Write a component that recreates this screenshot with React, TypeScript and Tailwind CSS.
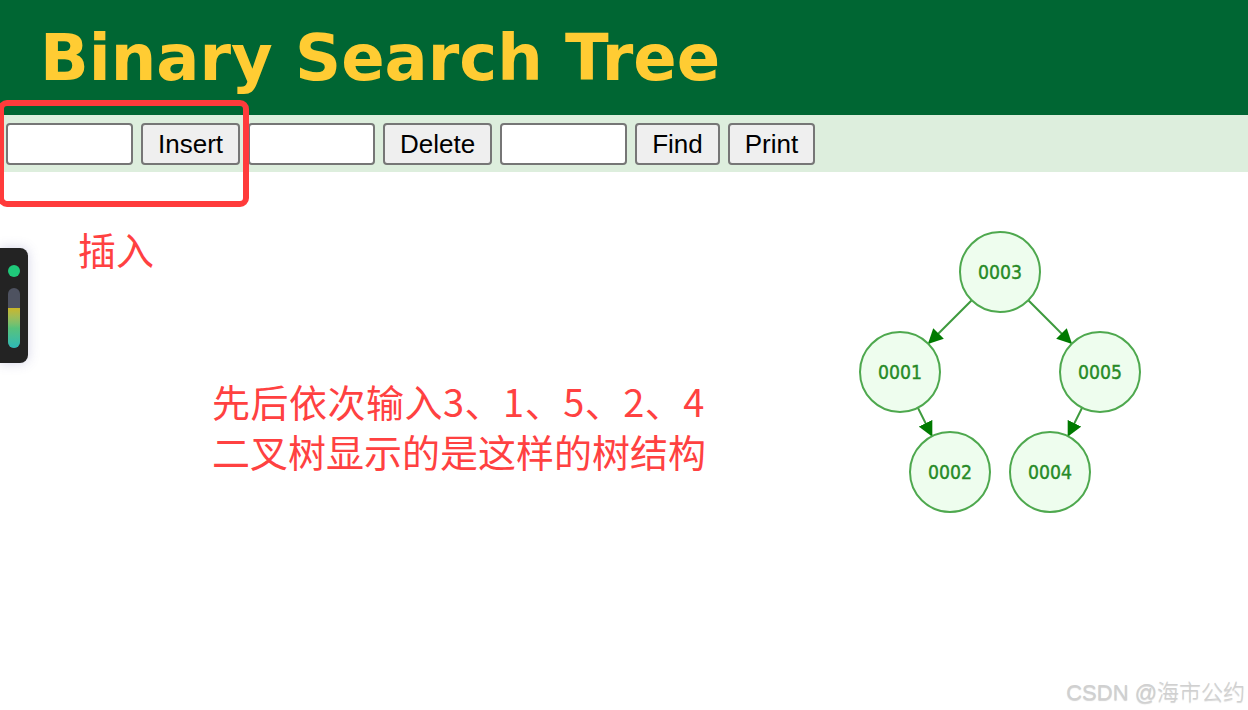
import React from "react";

type Node = { id: string; x: number; y: number };

const nodes: Node[] = [
  { id: "0003", x: 145, y: 44 },
  { id: "0001", x: 45, y: 144 },
  { id: "0005", x: 245, y: 144 },
  { id: "0002", x: 95, y: 244 },
  { id: "0004", x: 195, y: 244 },
];

const edges: [string, string][] = [
  ["0003", "0001"],
  ["0003", "0005"],
  ["0001", "0002"],
  ["0005", "0004"],
];

const R = 40;

function TreeDiagram() {
  const byId = (id: string) => nodes.find((n) => n.id === id)!;
  return (
    <svg width="290" height="290" viewBox="0 0 290 290" className="shrink-0">
      <defs>
        <marker id="arrow" viewBox="0 0 10 10" refX="9" refY="5" markerWidth="7.5" markerHeight="7.5" orient="auto">
          <path d="M0,0 L10,5 L0,10 z" fill="#007a00" />
        </marker>
      </defs>
      {edges.map(([a, b]) => {
        const p = byId(a);
        const q = byId(b);
        const dx = q.x - p.x;
        const dy = q.y - p.y;
        const len = Math.hypot(dx, dy);
        const ux = dx / len;
        const uy = dy / len;
        return (
          <line
            key={a + b}
            x1={p.x + ux * R}
            y1={p.y + uy * R}
            x2={q.x - ux * (R + 1)}
            y2={q.y - uy * (R + 1)}
            stroke="#3d9a3d"
            strokeWidth="2"
            markerEnd="url(#arrow)"
          />
        );
      })}
      {nodes.map((n) => (
        <g key={n.id}>
          <circle cx={n.x} cy={n.y} r={R} fill="#eefdee" stroke="#4ea84e" strokeWidth="2" />
          <text
            x={n.x}
            y={n.y + 7}
            textAnchor="middle"
            fontSize="20"
            fill="#278a27"
            stroke="#278a27"
            strokeWidth="0.4"
            textLength="44"
            lengthAdjust="spacingAndGlyphs"
            style={{ fontFamily: '"DejaVu Sans Condensed", "DejaVu Sans", sans-serif' }}
          >
            {n.id}
          </text>
        </g>
      ))}
    </svg>
  );
}

const inputCls =
  "w-[127px] h-[42px] bg-white border-2 border-[#767676] rounded-[4px] px-1 text-[26px]";
const btnCls =
  "h-[42px] px-[15px] bg-[#efefef] border-2 border-[#767676] rounded-[4px] text-[26px] text-black leading-none";

export default function App() {
  return (
    <div className="relative w-[1248px] h-[710px] bg-white overflow-hidden font-['Liberation_Sans',Arial,sans-serif]">
      <header className="h-[115px] bg-[#006633] pl-[40px] pt-[18px]">
        <h1 className="text-[#ffcc33] text-[64px] leading-[80px] font-bold font-['DejaVu_Sans',Verdana,sans-serif]">
          Binary Search Tree
        </h1>
      </header>

      <div className="h-[57px] bg-[#ddeedd] flex items-start gap-[8px] pl-[6px] pt-[8px]">
        <input className={inputCls} />
        <button className={btnCls}>Insert</button>
        <input className={inputCls} />
        <button className={btnCls}>Delete</button>
        <input className={inputCls} />
        <button className={btnCls}>Find</button>
        <button className={btnCls}>Print</button>
      </div>

      <main className="flex font-['Microsoft_YaHei','Noto_Sans_CJK_SC',sans-serif] text-[#ff4141] text-[38px] leading-[50px]">
        <div className="flex-1">
          <p className="ml-[78px] mt-[52px]">插入</p>
          <p className="ml-[212px] mt-[102px]">
            <span className="tracking-[0.5px]">先后依次输入3、1、5、2、4</span>
            <br />
            二叉树显示的是这样的树结构
          </p>
        </div>
        <div className="mt-[56px] mr-[103px]">
          <TreeDiagram />
        </div>
      </main>

      {/* red annotation box */}
      <div className="absolute left-[-2px] top-[100px] w-[251px] h-[107px] border-[6px] border-[#ff3b3b] rounded-[9px] pointer-events-none" />

      {/* floating side widget */}
      <div className="absolute left-0 top-[248px] w-[28px] h-[115px] bg-[#232323] rounded-r-[8px] shadow-[0_0_12px_rgba(80,80,160,0.25)]">
        <div className="absolute left-[8px] top-[17px] w-[12px] h-[12px] rounded-full bg-[#1fc97a]" />
        <div className="absolute left-[8px] top-[40px] w-[12px] h-[60px] rounded-full bg-[#4e5260] overflow-hidden flex flex-col justify-end">
          <div className="h-[40px] bg-gradient-to-b from-[#c9b625] via-[#58c27a] to-[#2bb8b5]" />
        </div>
      </div>

      <div className="absolute right-[3px] bottom-[6px] text-[22px] leading-none font-light text-[#d0d0d0] font-['Liberation_Sans','Noto_Sans_CJK_SC',sans-serif] [text-shadow:0_1px_1px_rgba(0,0,0,0.18)]">
        CSDN @海市公约
      </div>
    </div>
  );
}
